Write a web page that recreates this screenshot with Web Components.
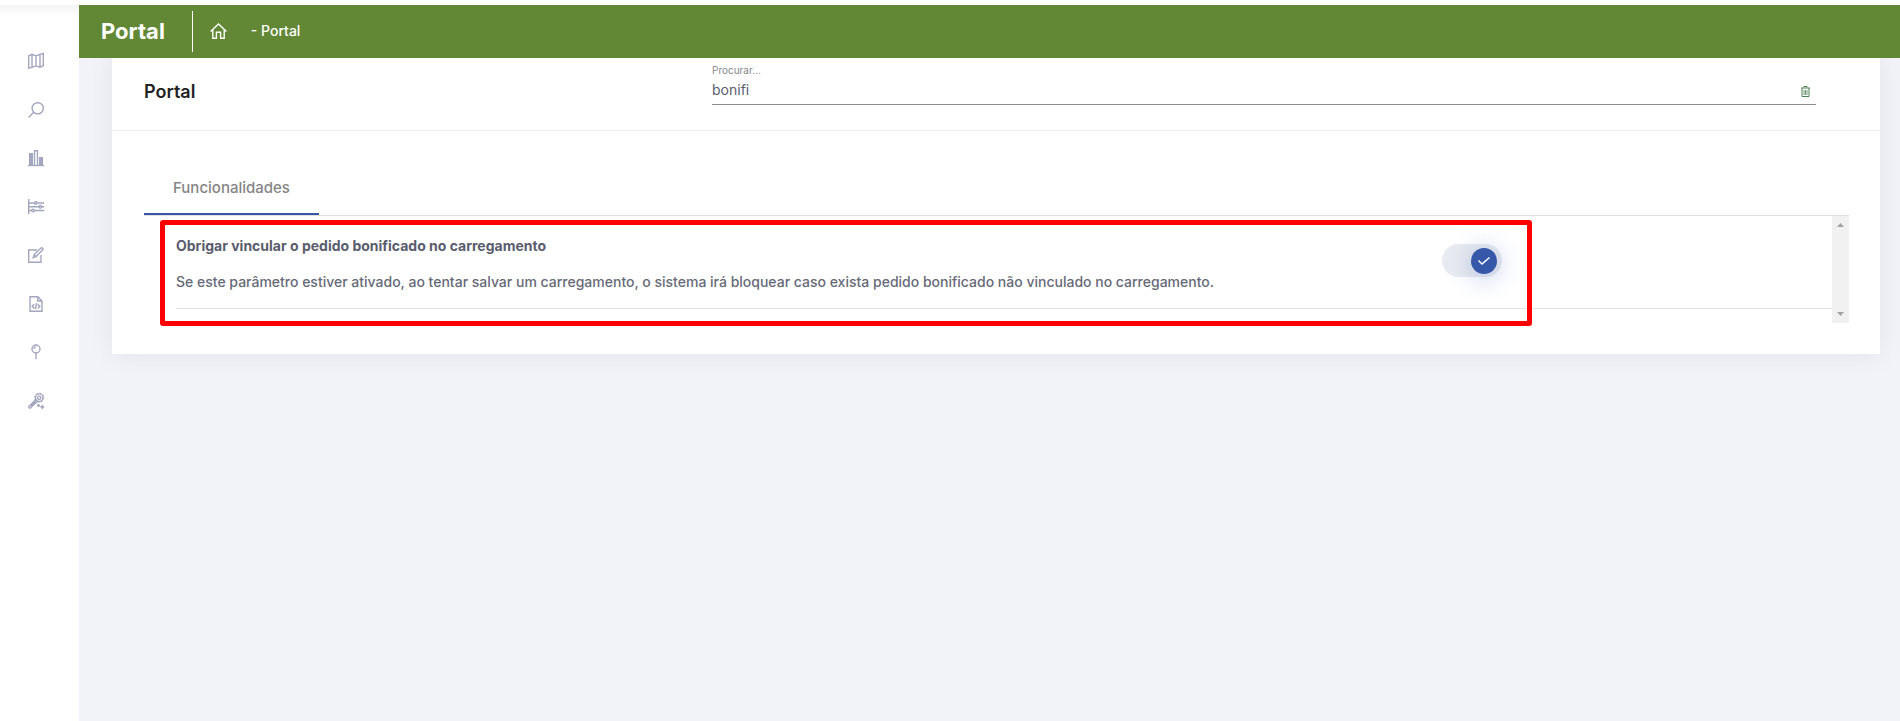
<!DOCTYPE html>
<html lang="pt-BR">
<head>
<meta charset="utf-8">
<meta name="viewport" content="width=device-width, initial-scale=1">
<title>Portal</title>
<style>
  body { margin: 0; background: #fff; font-family: Inter, "Open Sans", sans-serif; color: #595d6e; }
</style>
</head>
<body>
<app-shell>
  <side-nav slot="nav"></side-nav>
  <top-bar slot="header" heading="Portal"> - Portal</top-bar>
  <portal-card heading="Portal">
    <search-field slot="search" label="Procurar..." value="bonifi"></search-field>
    <tab-panel label="Funcionalidades">
      <setting-row checked>
        <span slot="title">Obrigar vincular o pedido bonificado no carregamento</span>
        <span slot="description">Se este parâmetro estiver ativado, ao tentar salvar um carregamento, o sistema irá bloquear caso exista pedido bonificado não vinculado no carregamento.</span>
      </setting-row>
    </tab-panel>
  </portal-card>
</app-shell>

<script>
const define = (name, render) => customElements.define(name, class extends HTMLElement {
  constructor() {
    super();
    this.attachShadow({ mode: 'open' });
  }
  connectedCallback() {
    const template = document.createElement('template');
    template.innerHTML = render(this);
    this.shadowRoot.replaceChildren(template.content.cloneNode(true));
  }
});

define('app-shell', () => `
  <style>
    :host { display: grid; grid-template-columns: 79px minmax(0, 1fr); min-height: 100vh; box-sizing: border-box; padding-top: 5px; }
    .content { background: #f2f3f8; }
    main { padding: 0 20px 32px 33px; }
  </style>
  <slot name="nav"></slot>
  <div class="content">
    <slot name="header"></slot>
    <main><slot></slot></main>
  </div>`);

const icons = {
  Mapa: '<path d="M.7 2.8 4 1.3l4 1.5 4-1.5 3.3-.8v12.2L12 14.3l-4-1.4-4 1.4-3.3.9zM4 1.3v13M8 2.8v10.1M12 1.3v13"/>',
  Pesquisa: '<circle cx="9.7" cy="6.3" r="5.6"/><path d="M5.7 10.3.6 15.4"/>',
  Indicadores: '<path d="M0 15.5h16"/><path fill="currentColor" stroke="none" d="M1 3h4v12H1zM11 7h4v8h-4z"/><path d="M6.5 15V.7h3V15"/>',
  Ajustes: '<path d="M.7 0v15M1 4h5.3m3 0H16M1 7.8h9.8m3 0H16M1 11.5h2.5m3 0H16"/><circle cx="7.8" cy="4" r="1.3"/><circle cx="12.3" cy="7.8" r="1.3"/><circle cx="5" cy="11.5" r="1.3"/>',
  Editar: '<path d="M9 3H.7v12.2H13V8"/><path d="m5.2 10.6 1-3L13 1.1q.8-.7 1.6.1t.2 1.6L8 9.6zM6.2 7.6 8 9.6"/>',
  'Código': '<path d="M2 .7h7.8L14 5v10.3H2zM9.8.7V5H14"/><path d="M6.2 8.2 4.2 10.3l2 2.1M9.8 8.2l2 2.1-2 2.1M8.7 7.2l-1.4 6"/>',
  Local: '<circle cx="8" cy="5" r="4"/><path d="M8 9v6.3M5.8 5Q6 3.1 7.8 2.8"/>',
  Ferramentas: '<path d="m8.7 5.8-8 7.8q-.3 1.2 1.4 1.7l8-7.6M7.6 8.3l-4.8 4.8"/><circle cx="11.2" cy="4.7" r="1.6"/><circle cx="11.2" cy="4.7" r="3.8"/><circle cx="11.2" cy="4.7" r="4.6" stroke-dasharray="1.6 2" stroke-width="1"/><path d="M14.3 12v4M12.3 14h4M10.5 11v3M9 12.5h3"/>'
};

define('side-nav', () => `
  <style>
    :host { display: block; background: linear-gradient(#f4f4f4, #fff 12px); padding-top: 32px; }
    nav { display: grid; grid-auto-rows: 1fr; height: 388px; }
    a { display: grid; place-items: center; padding-right: 7px; color: #a3a6bf; }
    svg { display: block; width: 16px; height: 16px; overflow: visible; fill: none; stroke: currentColor; stroke-width: 1.4; }
  </style>
  <nav aria-label="Menu">${Object.entries(icons).map(([name, shape]) =>
    `<a href="#" aria-label="${name}"><svg viewBox="0 0 16 16">${shape}</svg></a>`).join('')}</nav>`);

define('top-bar', host => `
  <style>
    :host { display: flex; align-items: center; height: 53px; background: #638835; color: #fff; position: relative; }
    h1 { margin: 0 27px 0 22px; font-size: 22px; line-height: 28px; font-weight: 700; padding-bottom: 2px; }
    .crumbs { display: flex; align-items: center; height: 41px; border-left: 1px solid #fff; padding-left: 17px; }
    a { color: inherit; margin-right: 24px; padding-bottom: 2px; }
    svg { display: block; width: 17px; height: 16px; fill: none; stroke: currentColor; stroke-width: 1.4; }
    span { font-size: 14px; line-height: 20px; font-weight: 500; padding-bottom: 2px; }
  </style>
  <h1>${host.getAttribute('heading')}</h1>
  <div class="crumbs">
    <a href="#" aria-label="Início"><svg viewBox="0 0 17 16"><path d="M.6 8.6 8.5 1l7.9 7.6M2.8 7v8.3h3.6V9.2h4.2v6.1h3.6V7"/></svg></a>
    <span><slot></slot></span>
  </div>`);

define('portal-card', host => `
  <style>
    :host { display: block; background: #fff; box-shadow: 0 0 24px rgba(82, 84, 105, .1); clip-path: inset(0 -40px -40px -40px); }
    header { display: grid; grid-template-columns: 1fr 2fr; align-items: center; padding: 0 32px; height: 72px; border-bottom: 1px solid #ebedf2; }
    h2 { margin: 0; padding-bottom: 4px; color: #212224; font-size: 18px; line-height: 24px; font-weight: 600; }
    .body { padding: 31px 31px 31px 32px; }
  </style>
  <header>
    <h2>${host.getAttribute('heading')}</h2>
    <slot name="search"></slot>
  </header>
  <div class="body"><slot></slot></div>`);

define('search-field', host => `
  <style>
    :host { display: block; align-self: start; margin-right: 32px; padding-top: 4px; }
    label { display: block; font-size: 10px; line-height: 16px; color: #86878b; }
    .line { display: flex; align-items: center; height: 26px; border-bottom: 1px solid #8d8e92; padding-right: 6px; }
    input { flex: 1; min-width: 0; border: 0; padding: 0 0 2px; outline: 0; background: none; font: 400 14px/20px Inter, sans-serif; color: #595d6e; }
    button { border: 0; padding: 0; background: none; color: #4f8055; }
    svg { display: block; width: 9px; height: 11px; fill: none; stroke: currentColor; }
  </style>
  <label for="query">${host.getAttribute('label')}</label>
  <div class="line">
    <input id="query" type="text" value="${host.getAttribute('value')}">
    <button type="button" aria-label="Limpar"><svg viewBox="0 0 9 11"><path d="M0 2h9M3 1.5v-1h3v1M1 2v8.5h7V2"/><path stroke-width=".8" d="M3 4v5M4.5 4v5M6 4v5"/></svg></button>
  </div>`);

define('tab-panel', host => `
  <style>
    :host { display: block; position: relative; }
    .tabs { display: flex; border-bottom: 1px solid #e0e0e0; }
    button.tab { border: 0; border-bottom: 2px solid #3756a8; background: none; padding: 15px 29px; font: 500 15px/21px Inter, sans-serif; color: #858585; }
    .view { display: grid; grid-template-columns: minmax(0, 1fr) 17px; }
    .list { padding: 0 0 14px 32px; }
    .scroll { display: flex; flex-direction: column; justify-content: space-between; background: #f1f1f1; }
    .scroll button { display: grid; place-items: center; height: 18px; border: 0; padding: 0; background: none; color: #a3a3a3; }
    .scroll svg { display: block; width: 7px; height: 4px; fill: currentColor; }
    .highlight { position: absolute; top: 58px; left: 16px; right: 317px; bottom: -3px; box-sizing: border-box; border: 5px solid #f00; border-radius: 3px; pointer-events: none; }
  </style>
  <div class="tabs" role="tablist"><button class="tab" role="tab" aria-selected="true">${host.getAttribute('label')}</button></div>
  <div class="view">
    <div class="list"><slot></slot></div>
    <div class="scroll">
      <button type="button" aria-label="Rolar para cima"><svg viewBox="0 0 7 4"><path d="M0 4 3.5 0 7 4z"/></svg></button>
      <button type="button" aria-label="Rolar para baixo"><svg viewBox="0 0 7 4"><path d="M0 0h7L3.5 4z"/></svg></button>
    </div>
  </div>
  <div class="highlight"></div>`);

define('setting-row', host => `
  <style>
    :host { display: grid; grid-template-columns: minmax(0, 1fr) 390px; padding: 20px 0 16px; border-bottom: 1px solid #e2e2e2; }
    label { display: grid; gap: 16px; font-size: 14px; line-height: 20px; }
    .title { font-weight: 700; }
    .description { font-weight: 500; color: #666977; }
    input { appearance: none; position: relative; margin: 8px 0 0; width: 60px; height: 33px; border-radius: 17px; background: #e9ebf1; }
    input::before { content: ""; position: absolute; top: 4px; left: 4px; width: 26px; height: 26px; border-radius: 50%; background: #fff; }
    input:checked::before { left: 29px; background: #3558a8; box-shadow: 0 3px 24px 2px rgba(53, 88, 180, .3); }
    input:checked::after { content: ""; position: absolute; left: 36px; top: 13px; width: 12px; height: 8px; background: #fff; clip-path: polygon(0 4px, 1px 3px, 4px 6px, 11px 0, 12px 1px, 4px 8px); }
  </style>
  <label for="toggle">
    <span class="title"><slot name="title"></slot></span>
    <span class="description"><slot name="description"></slot></span>
  </label>
  <input id="toggle" type="checkbox" role="switch" ${host.hasAttribute('checked') ? 'checked' : ''}>`);
</script>
</body>
</html>
